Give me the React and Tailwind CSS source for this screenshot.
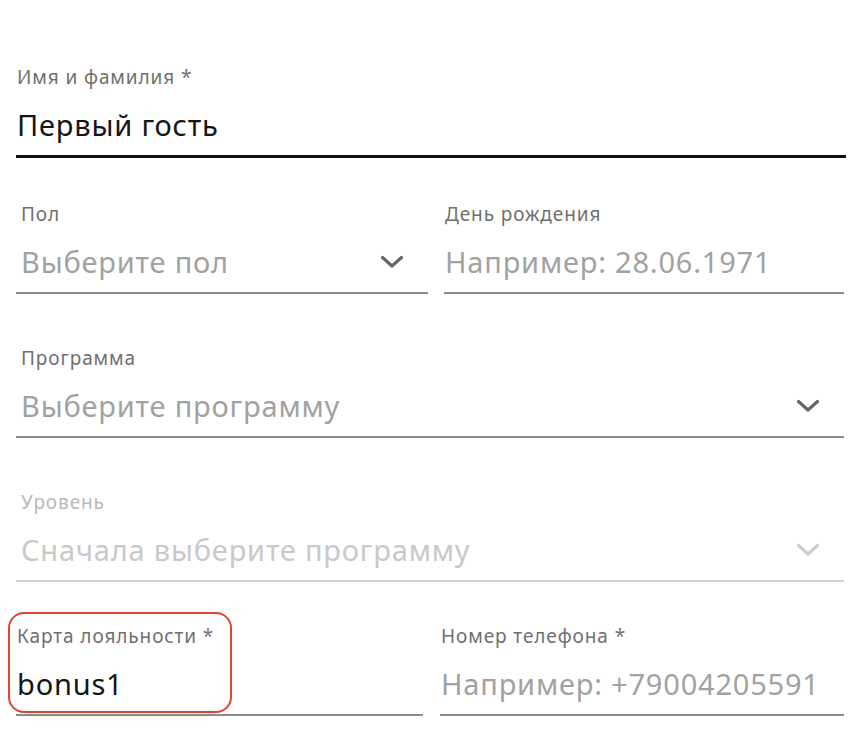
import { useState } from 'react';

const font = { fontFamily: '"Noto Sans", Arial, sans-serif' };

const Chevron = ({ light }) => (
  <svg width="24" height="14" viewBox="0 0 24 14" fill="none" className="shrink-0">
    <path
      d="M2.5 2.5L12 11L21.5 2.5"
      stroke={light ? '#cdcdcd' : '#666666'}
      strokeWidth="3.2"
      strokeLinecap="round"
      strokeLinejoin="round"
    />
  </svg>
);

const Field = ({ label, value, placeholder, select, disabled, active, inset, className = '' }) => {
  const labelColor = disabled ? 'text-[#b9b9b9]' : 'text-[#6f6f6f]';
  const textColor = value ? 'text-[#151515]' : disabled ? 'text-[#c9c9c9]' : 'text-[#a2a2a2]';
  const line = active ? 'border-b-[3px] border-[#111111]' : disabled ? 'border-b-2 border-[#d2d2d2]' : 'border-b-2 border-[#8e8e8e]';
  return (
    <div className={`relative flex flex-col ${line} ${className}`}>
      <div className={`h-6 text-[19px] leading-6 tracking-[0.9px] whitespace-nowrap ${labelColor} ${inset ? 'pl-[5px]' : 'pl-px'}`}>{label}</div>
      <div className={`mt-[18px] mb-3 flex h-9 items-center justify-between ${inset ? 'pl-[5px]' : 'pl-px'} pr-6`}>
        <span className={`text-[29px] leading-9 tracking-[0.8px] whitespace-nowrap ${textColor}`}>{value || placeholder}</span>
        {select && <Chevron light={disabled} />}
      </div>
    </div>
  );
};

export default function App() {
  const [name] = useState('Первый гость');

  return (
    <div className="min-h-[734px] w-full bg-white px-4 pt-[65px]" style={font}>
      <Field label="Имя и фамилия *" value={name} active />

      <div className="mt-[44px] grid grid-cols-2 gap-4">
        <Field label="Пол" placeholder="Выберите пол" select inset className="mr-[-5px]" />
        <Field label="День рождения" placeholder="Например: 28.06.1971" className="ml-[5px] mr-[2px]" />
      </div>

      <Field label="Программа" placeholder="Выберите программу" select inset className="mt-[52px] mr-[2px]" />

      <Field label="Уровень" placeholder="Сначала выберите программу" select disabled inset className="mt-[52px] mr-[2px]" />

      <div className="mt-[42px] grid grid-cols-2 gap-4">
        <div className="relative">
          <div className="absolute left-[-8px] top-[-12px] h-[101px] w-[224px] rounded-[16px] border-2 border-[#e2432c]" />
          <Field label="Карта лояльности *" value="bonus1" />
        </div>
        <Field label="Номер телефона *" placeholder="Например: +79004205591" className="ml-px mr-[2px]" />
      </div>
    </div>
  );
}
